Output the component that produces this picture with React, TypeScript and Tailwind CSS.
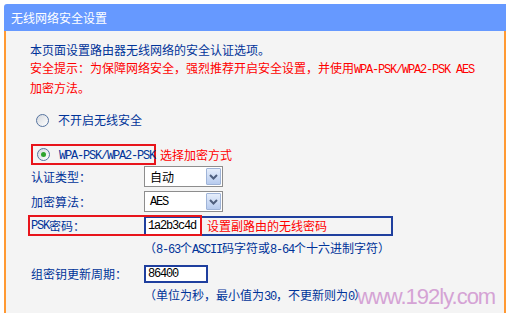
import React from 'react';

const cjk = "font-['Noto_Sans_CJK_SC',sans-serif]";

// ASCII runs: SimSun-like half-width (6px per char)
function M({ children }: { children: React.ReactNode }) {
  return <span className="font-['Liberation_Mono',monospace] tracking-[-1.2px]">{children}</span>;
}

function Radio({ checked }: { checked?: boolean }) {
  return (
    <span className="flex h-[13px] w-[13px] shrink-0 items-center justify-center rounded-full border border-[#55739f] bg-gradient-to-br from-[#d6d9de] to-white">
      {checked && <span className="h-[5px] w-[5px] rounded-full bg-[#2da32d]" />}
    </span>
  );
}

function Select({ value }: { value: React.ReactNode }) {
  return (
    <div className="flex h-[21px] w-[79px] items-stretch border border-[#8d8d8d] bg-white">
      <div className="flex flex-1 items-center pl-[5px] text-black">{value}</div>
      <div className="m-px flex w-[15px] items-center justify-center rounded-[1px] border border-[#9fb4d8] bg-gradient-to-b from-[#e6eefb] to-[#b7cbee]">
        <svg width="9" height="6" viewBox="0 0 9 6">
          <path d="M1 1 L4.5 4.5 L8 1" stroke="#4f5f7e" strokeWidth="2" fill="none" />
        </svg>
      </div>
    </div>
  );
}

export default function App() {
  return (
    <div className={`relative h-[313px] w-[509px] overflow-hidden bg-white text-[12px] ${cjk}`}>
      <div className="ml-[4px] mt-[4px] flex h-[309px] w-[502px] flex-col">
        <div className="flex h-[27px] items-center rounded-tl-[3px] bg-[#6699ff] pl-[7px] leading-none text-white">
          无线网络安全设置
        </div>

        <div className="flex-1 border-x-2 border-[#ff9933] bg-[#f4f4f4] pl-[24px] pt-[10px] text-[#003399]">
          <div className="leading-[18px] whitespace-nowrap">
            <p>本页面设置路由器无线网络的安全认证选项。</p>
            <p className="text-[#ff0000]">
              安全提示：为保障网络安全，强烈推荐开启安全设置，并使用<M>WPA-PSK/WPA2-PSK AES</M>
              <br />
              加密方法。
            </p>
          </div>

          <div className="ml-[6px] mt-[13px] flex h-[20px] items-center">
            <Radio />
            <span className="ml-[9px]">不开启无线安全</span>
          </div>

          <div className="ml-[1px] mt-[14px] flex h-[21px] items-center whitespace-nowrap">
            <div className="flex h-[21px] w-[125px] items-center border-2 border-[#e8141b] pl-[4px]">
              <Radio checked />
              <span className="ml-[9px]"><M>WPA-PSK/WPA2-PSK</M></span>
            </div>
            <span className="ml-[4px] text-[#ff0000]">选择加密方式</span>
          </div>

          <div className="ml-[1px] mt-[1px] flex h-[21px] items-center">
            <span className="w-[113px]">认证类型：</span>
            <Select value="自动" />
          </div>

          <div className="ml-[1px] mt-[4px] flex h-[21px] items-center">
            <span className="w-[113px]">加密算法：</span>
            <Select value={<M>AES</M>} />
          </div>

          <div className="relative ml-[1px] mt-[3px] flex h-[21px] items-end">
            <span className="flex h-[21px] w-[113px] items-center"><M>PSK</M>密码：</span>
            <div className="flex h-[20px] w-[58px] items-center border-2 border-[#1f3f9e] bg-white pl-[2px] text-black">
              <M>1a2b3c4d</M>
            </div>
            <div className="flex h-[20px] w-[191px] items-center border-2 border-l-0 border-[#1f3f9e] pl-[5px] text-[#ff0000]">
              设置副路由的无线密码
            </div>
            <div className="absolute left-[-3px] top-0 h-[21px] w-[174px] border-2 border-[#e8141b]" />
          </div>

          <p className="ml-[114px] mt-[3px] whitespace-nowrap leading-[18px]">
            （<M>8-63</M>个<M>ASCII</M>码字符或<M>8-64</M>个十六进制字符）
          </p>

          <div className="ml-[1px] mt-[6px] flex h-[18px] items-center">
            <span className="w-[113px]">组密钥更新周期：</span>
            <div className="flex h-[18px] w-[64px] items-center border-2 border-[#1f3f9e] bg-white pl-[2px] text-black">
              <M>86400</M>
            </div>
          </div>

          <p className="ml-[114px] mt-[3px] whitespace-nowrap leading-[18px]">
            （单位为秒，最小值为<M>30</M>，不更新则为<M>0</M>）
          </p>
        </div>
      </div>

      <div className="absolute left-[357px] top-[286px] font-['Liberation_Sans',sans-serif] text-[22px] leading-[22px] tracking-[-1px] text-[#d5a3d5]">
        www.192ly.com
      </div>
    </div>
  );
}
